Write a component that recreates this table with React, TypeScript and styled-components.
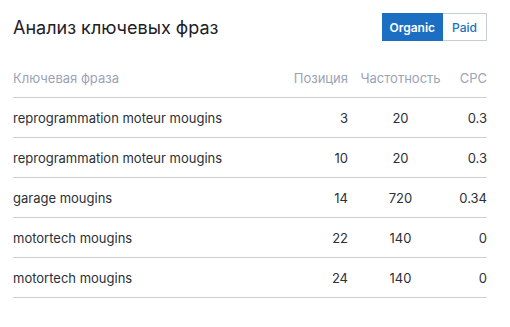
import React from "react";
import styled, { createGlobalStyle } from "styled-components";

const GlobalStyle = createGlobalStyle`
  body {
    margin: 0;
    background: #ffffff;
    font-family: Inter, "Noto Sans", sans-serif;
    color: #2b2f38;
  }
`;

const Card = styled.div`
  width: 510px;
  padding: 13px 23px 0 13px;
  box-sizing: border-box;
`;

const Header = styled.div`
  display: flex;
  align-items: center;
  justify-content: space-between;
  height: 28px;
`;

const Title = styled.h2`
  margin: 0;
  font-size: 18px;
  font-weight: 400;
  color: #1d2029;
`;

const Toggle = styled.div`
  display: flex;
  height: 28px;
`;

const ToggleButton = styled.button<{ $active?: boolean }>`
  font-family: inherit;
  font-size: 12px;
  font-weight: ${(p) => (p.$active ? 600 : 500)};
  padding: 0 ${(p) => (p.$active ? "7px" : "9px")};
  border: 1px solid ${(p) => (p.$active ? "#1b6ec2" : "#c5cdd9")};
  border-left-width: ${(p) => (p.$active ? "1px" : "0")};
  background: ${(p) => (p.$active ? "#1b6ec2" : "#ffffff")};
  color: ${(p) => (p.$active ? "#ffffff" : "#1b6ec2")};
  cursor: pointer;
`;

const Table = styled.div`
  margin-top: 17px;
`;

const Row = styled.div<{ $head?: boolean }>`
  display: grid;
  grid-template-columns: 1fr 74px 93px 40px;
  align-items: center;
  height: 39px;
  border-bottom: 1px solid #c9cfdb;
  font-size: 13px;
  color: ${(p) => (p.$head ? "#9ba3b7" : "#2b2f38")};
`;

const Cell = styled.div<{ $align?: "left" | "right" | "center"; $pr?: number }>`
  text-align: ${(p) => p.$align || "left"};
  padding-right: ${(p) => p.$pr || 0}px;
  white-space: nowrap;
`;

const rows = [
  { phrase: "reprogrammation moteur mougins", pos: 3, freq: 20, cpc: "0.3" },
  { phrase: "reprogrammation moteur mougins", pos: 10, freq: 20, cpc: "0.3" },
  { phrase: "garage mougins", pos: 14, freq: 720, cpc: "0.34" },
  { phrase: "motortech mougins", pos: 22, freq: 140, cpc: "0" },
  { phrase: "motortech mougins", pos: 24, freq: 140, cpc: "0" },
];

export default function App() {
  return (
    <>
      <GlobalStyle />
      <Card>
        <Header>
          <Title>Анализ ключевых фраз</Title>
          <Toggle>
            <ToggleButton $active>Organic</ToggleButton>
            <ToggleButton>Paid</ToggleButton>
          </Toggle>
        </Header>
        <Table>
          <Row $head>
            <Cell>Ключевая фраза</Cell>
            <Cell $align="right" $pr={6}>Позиция</Cell>
            <Cell $align="center">Частотность</Cell>
            <Cell $align="right">CPC</Cell>
          </Row>
          {rows.map((r, i) => (
            <Row key={i}>
              <Cell>{r.phrase}</Cell>
              <Cell $align="right" $pr={6}>{r.pos}</Cell>
              <Cell $align="center">{r.freq}</Cell>
              <Cell $align="right">{r.cpc}</Cell>
            </Row>
          ))}
        </Table>
      </Card>
    </>
  );
}
